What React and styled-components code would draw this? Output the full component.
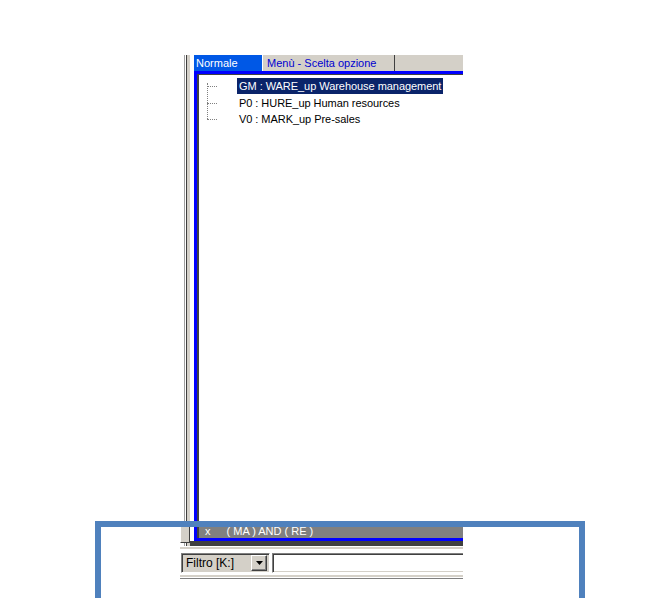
import styled, { createGlobalStyle } from 'styled-components'

const GlobalStyle = createGlobalStyle`
    html, body { margin: 0; padding: 0; background: #ffffff; }
    body { font-family: "Liberation Sans", Arial, sans-serif; font-size: 11px; }
`

const Page = styled.div`
    position: relative;
    width: 657px;
    height: 598px;
    overflow: hidden;
    padding: 55px 0 0 180px;
    box-sizing: border-box;
`

const Window = styled.div`
    width: 283px;
    display: flex;
    flex-direction: column;
`

const Upper = styled.div`
    display: flex;
`

const Rail = styled.div`
    width: 10px;
    display: flex;
    flex-direction: column;
    justify-content: flex-end;
    background: linear-gradient(to right,
        #ffffff 0 4px, #a0a0a0 4px 5px, #ffffff 5px 6px,
        #404040 6px 7px, #d4d0c8 7px 10px);
`

const RailFoot = styled.div`
    height: 17px;
    margin-bottom: 3px;
    background: #d4d0c8;
    border-top: 1px solid #ffffff;
    border-left: 1px solid #ffffff;
    border-right: 1px solid #404040;
    border-bottom: 1px solid #404040;
    box-sizing: border-box;
`

const Column = styled.div`
    flex: 1;
    display: flex;
    flex-direction: column;
`

const Body = styled.div`
    margin-left: 4px;
    display: flex;
    flex-direction: column;
`

const TabStrip = styled.div`
    height: 16px;
    display: flex;
    background: #d4d0c8;
`

const Tab = styled.div`
    width: ${(props) => props.$width}px;
    box-sizing: border-box;
    padding-left: ${(props) => props.$active ? 2 : 4}px;
    line-height: 17px;
    white-space: nowrap;
    ${(props) => props.$active ? (
        `background: #0058e6; color: #ffffff;`
    ) : (
        `background: #d4d0c8; color: #0000d0;
        border-left: 1px solid #ffffff;
        border-right: 1px solid #404040;`
    )}
`

const Frame = styled.div`
    border-top: 3px solid #0000ff;
    border-left: 3px solid #0000ff;
    border-bottom: 3px solid #0000ff;
    display: flex;
    flex-direction: column;
`

const Content = styled.div`
    height: 450px;
    background: #ffffff;
    border-top: 1px solid #404040;
    border-left: 2px solid #404040;
    padding: 3px 0 0 8px;
    box-sizing: border-box;
    display: flex;
    flex-direction: column;
    gap: 0.5px;
`

const Row = styled.div`
    display: flex;
    align-items: center;
    height: 16px;
`

const Connector = styled.div`
    position: relative;
    width: 10px;
    height: 16px;
    margin-right: 20px;
    &::before {
        content: "";
        position: absolute;
        left: 0;
        top: ${(props) => props.$first ? 5 : -1}px;
        height: ${(props) => props.$last ? 9 : props.$first ? 12 : 17}px;
        border-left: 1px dotted #808080;
    }
    &::after {
        content: "";
        position: absolute;
        left: 0;
        top: 8px;
        width: 10px;
        border-top: 1px dotted #808080;
    }
`

const Label = styled.span`
    padding: 0 2px;
    line-height: 16px;
    letter-spacing: -0.05px;
    white-space: nowrap;
    color: ${(props) => props.$selected ? '#ffffff' : '#000000'};
    background: ${(props) => props.$selected ? '#0a246a' : 'transparent'};
`

const StatusBar = styled.div`
    height: 14px;
    background: #808080;
    color: #ffffff;
    border-left: 2px solid #404040;
    display: flex;
    align-items: center;
    line-height: 14px;
    padding-left: 6px;
    gap: 16px;
`

const DarkBand = styled.div`
    height: 5px;
    background: #404040;
`

const Separator = styled.div`
    height: 3px;
    border-top: 1px solid #ffffff;
    background: #d4d0c8;
    box-sizing: border-box;
`

const FilterRow = styled.div`
    display: flex;
    gap: 2px;
    padding: 4px 0 2px 1px;
`

const Sunken = styled.div`
    height: 20px;
    box-sizing: border-box;
    border-top: 1px solid #808080;
    border-left: 1px solid #808080;
    border-bottom: 1px solid #ffffff;
    box-shadow: inset 1px 1px 0 #404040, inset 0 -1px 0 #d4d0c8;
`

const Combo = styled(Sunken)`
    width: 89px;
    border-right: 1px solid #ffffff;
    background: #d4d0c8;
    display: flex;
    align-items: center;
    justify-content: space-between;
    padding: 2px 2px 2px 4px;
    font-size: 12px;
`

const DropButton = styled.div`
    width: 16px;
    height: 16px;
    box-sizing: border-box;
    background: #d4d0c8;
    border-top: 1px solid #ffffff;
    border-left: 1px solid #ffffff;
    border-right: 1px solid #404040;
    border-bottom: 1px solid #404040;
    box-shadow: inset -1px -1px 0 #808080;
    display: flex;
    align-items: center;
    justify-content: center;
`

const Input = styled(Sunken)`
    flex: 1;
    background: #ffffff;
`

const BottomLines = styled.div`
    height: 4px;
    border-top: 2px solid #d4d0c8;
    border-bottom: 1px solid #808080;
    box-sizing: border-box;
`

const Annotation = styled.div`
    position: absolute;
    left: 95px;
    top: 521px;
    width: 490px;
    height: 120px;
    box-sizing: border-box;
    border: 6px solid #4f81bd;
    pointer-events: none;
`

const items = [
    "GM : WARE_up Warehouse management",
    "P0 : HURE_up Human resources",
    "V0 : MARK_up Pre-sales",
]

export default function App() {
    return (
        <Page>
            <GlobalStyle />
            <Window>
                <Upper>
                    <Rail>
                        <RailFoot />
                    </Rail>
                    <Column>
                        <Body>
                            <TabStrip>
                                <Tab $active $width={68}>Normale</Tab>
                                <Tab $width={133}>Menù - Scelta opzione</Tab>
                            </TabStrip>
                            <Frame>
                                <Content>
                                    {items.map((item, index) => (
                                        <Row key={item}>
                                            <Connector
                                                $first={index === 0}
                                                $last={index === items.length - 1}
                                            />
                                            <Label $selected={index === 0}>{item}</Label>
                                        </Row>
                                    ))}
                                </Content>
                                <StatusBar>
                                    <span>x</span>
                                    <span>( MA ) AND ( RE )</span>
                                </StatusBar>
                            </Frame>
                        </Body>
                        <DarkBand />
                    </Column>
                </Upper>
                <Separator />
                <FilterRow>
                    <Combo>
                        <span>Filtro [K:]</span>
                        <DropButton>
                            <svg width="7" height="4" viewBox="0 0 7 4">
                                <path d="M0 0h7L3.5 4z" fill="#000" />
                            </svg>
                        </DropButton>
                    </Combo>
                    <Input />
                </FilterRow>
                <BottomLines />
            </Window>
            <Annotation />
        </Page>
    )
}
